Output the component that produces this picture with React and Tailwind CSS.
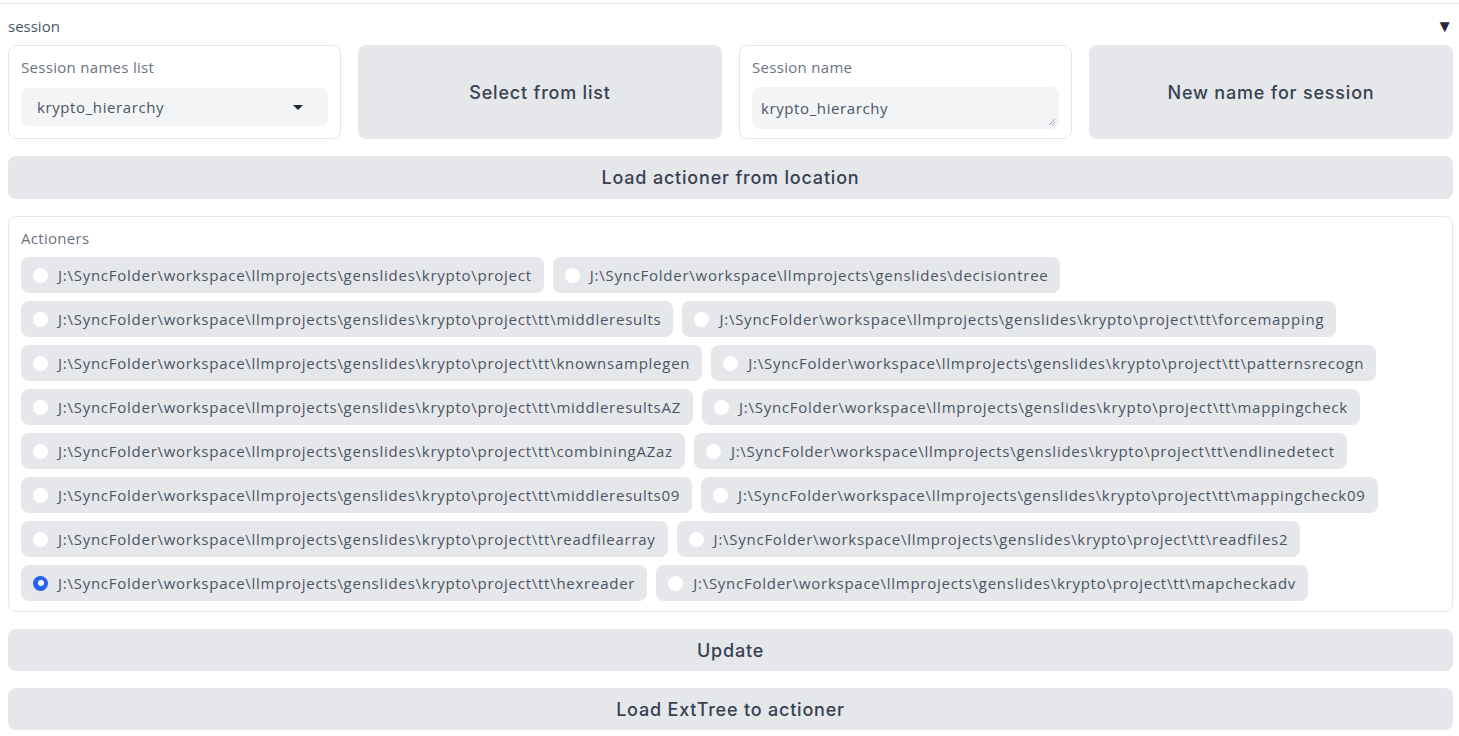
import React, { useState } from "react";

const base = "J:\\SyncFolder\\workspace\\llmprojects\\genslides\\";
const kt = base + "krypto\\project\\tt\\";

const rows = [
  [base + "krypto\\project", base + "decisiontree"],
  [kt + "middleresults", kt + "forcemapping"],
  [kt + "knownsamplegen", kt + "patternsrecogn"],
  [kt + "middleresultsAZ", kt + "mappingcheck"],
  [kt + "combiningAZaz", kt + "endlinedetect"],
  [kt + "middleresults09", kt + "mappingcheck09"],
  [kt + "readfilearray", kt + "readfiles2"],
  [kt + "hexreader", kt + "mapcheckadv"],
];

const font = { fontFamily: '"Open Sans", "Noto Sans", sans-serif' };
const btnFont = { fontFamily: 'Inter, "Open Sans", sans-serif' };

function Btn({ children, className = "" }) {
  return (
    <button
      style={btnFont}
      className={`bg-[#e5e7eb] rounded-[8px] text-[#374151] text-[18px] tracking-[0.8px] font-medium flex items-center justify-center ${className}`}
    >
      {children}
    </button>
  );
}

function Chip({ label, checked, onPick }) {
  return (
    <label
      onClick={onPick}
      className="h-[36px] bg-[#e5e7eb] rounded-[8px] flex items-center pl-[12px] pr-[12px] gap-[10px] cursor-pointer"
    >
      {checked ? (
        <span className="w-[15px] h-[15px] rounded-full bg-[#2563eb] flex items-center justify-center">
          <span className="w-[6px] h-[6px] rounded-full bg-white" />
        </span>
      ) : (
        <span className="w-[15px] h-[15px] rounded-full bg-white" />
      )}
      <span className="text-[15px] tracking-[0.74px] text-[#4b5563] whitespace-nowrap">{label}</span>
    </label>
  );
}

export default function App() {
  const [picked, setPicked] = useState(kt + "hexreader");
  return (
    <div className="w-[1459px] h-[736px] bg-white overflow-hidden" style={font}>
      <div className="mt-[3px] border-t border-[#e5e7eb] pl-[8px] pr-[6px] pt-[8px]">
        <div className="flex items-center justify-between h-[28px]">
          <span className="text-[15px] text-[#4b5563]">session</span>
          <span className="text-[17px] text-[#1f2937]">▼</span>
        </div>

        <div className="flex flex-col gap-[17px] mt-[5px]">
          <div className="flex gap-[17px] h-[94px]">
            <div className="w-[333px] border border-[#e5e7eb] rounded-[8px] px-[12px] pt-[10px] flex flex-col">
              <span className="text-[15px] tracking-[0.3px] text-[#6b7280] leading-[22px]">Session names list</span>
              <div className="mt-[10px] h-[38px] bg-[#f3f4f6] rounded-[8px] flex items-center justify-between pl-[16px] pr-[25px]">
                <span className="text-[15px] tracking-[0.6px] text-[#4b5563]">krypto_hierarchy</span>
                <span className="w-0 h-0 border-l-[5px] border-r-[5px] border-t-[5px] border-l-transparent border-r-transparent border-t-[#1f2937]" />
              </div>
            </div>
            <Btn className="flex-1">Select from list</Btn>
            <div className="w-[333px] border border-[#e5e7eb] rounded-[8px] px-[12px] pt-[10px] flex flex-col">
              <span className="text-[15px] tracking-[0.3px] text-[#6b7280] leading-[22px]">Session name</span>
              <div className="mt-[9px] h-[42px] bg-[#f3f4f6] rounded-[8px] flex items-center pl-[9px] relative">
                <span className="text-[15px] tracking-[0.6px] text-[#4b5563]">krypto_hierarchy</span>
                <svg className="absolute right-[3px] bottom-[3px]" width="8" height="8" viewBox="0 0 8 8">
                  <path d="M7 1L1 7M7 4L4 7" stroke="#9ca3af" strokeWidth="1" />
                </svg>
              </div>
            </div>
            <Btn className="flex-1">New name for session</Btn>
          </div>

          <Btn className="h-[43px] w-full">Load actioner from location</Btn>

          <div className="border border-[#e5e7eb] rounded-[8px] px-[12px] pt-[11px] pb-[10px]">
            <div className="text-[15px] tracking-[0.3px] text-[#6b7280] leading-[20px] mb-[9px]">Actioners</div>
            <div className="flex flex-col gap-[8px]">
              {rows.map((r, i) => (
                <div key={i} className="flex gap-[9px]">
                  {r.map((p) => (
                    <Chip key={p} label={p} checked={picked === p} onPick={() => setPicked(p)} />
                  ))}
                </div>
              ))}
            </div>
          </div>

          <Btn className="h-[42px] w-full">Update</Btn>
          <Btn className="h-[42px] w-full">Load ExtTree to actioner</Btn>
        </div>
      </div>
    </div>
  );
}
